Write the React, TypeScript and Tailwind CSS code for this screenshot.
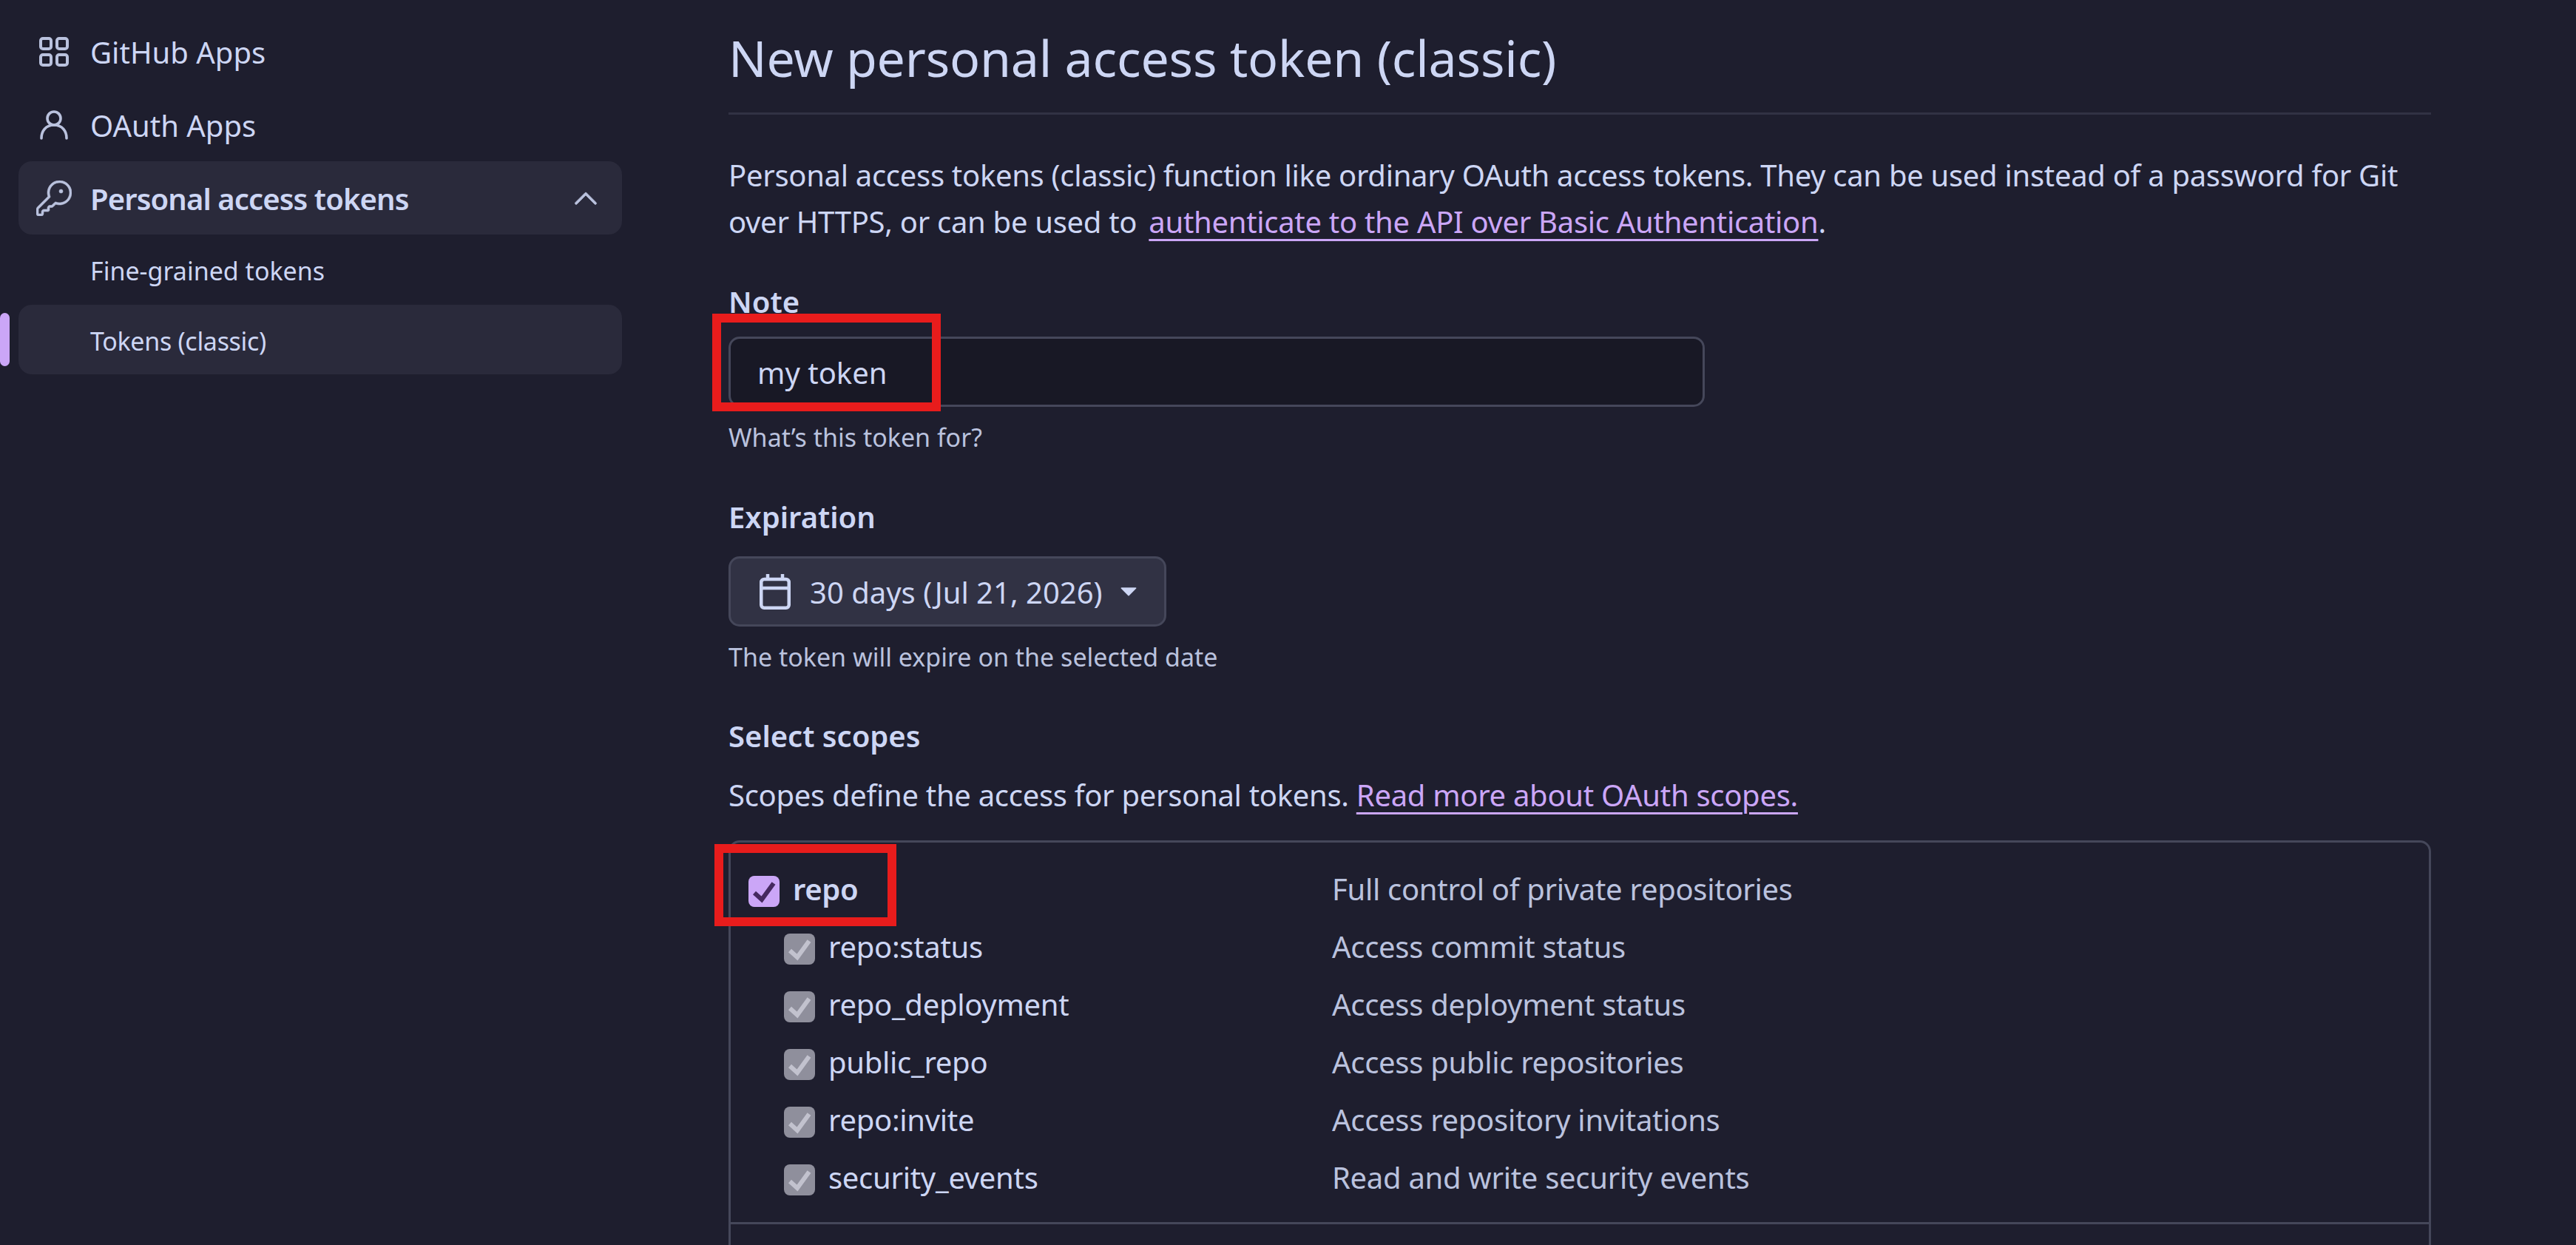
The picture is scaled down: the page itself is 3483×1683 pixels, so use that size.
import { GoKey, GoChevronUp, GoTriangleDown } from 'react-icons/go'

const scopes = [
  { name: 'repo:status', desc: 'Access commit status' },
  { name: 'repo_deployment', desc: 'Access deployment status' },
  { name: 'public_repo', desc: 'Access public repositories' },
  { name: 'repo:invite', desc: 'Access repository invitations' },
  { name: 'security_events', desc: 'Read and write security events' },
]

function Check({ color }: { color: string }) {
  return (
    <svg viewBox="0 0 42 42" className="w-[42px] h-[42px]" fill="none">
      <path d="M8 23l10 9L34 10" stroke={color} strokeWidth="6" />
    </svg>
  )
}

function AppsIcon() {
  return (
    <svg viewBox="0 0 16 16" className="w-[40px] h-[40px] text-[#bac2de] mr-[29px]" fill="none" stroke="currentColor" strokeWidth="1.6">
      <rect x="0.8" y="0.8" width="5.6" height="5.6" rx="1.2" />
      <rect x="9.6" y="0.8" width="5.6" height="5.6" rx="1.2" />
      <rect x="0.8" y="9.6" width="5.6" height="5.6" rx="1.2" />
      <rect x="9.6" y="9.6" width="5.6" height="5.6" rx="1.2" />
    </svg>
  )
}

function PersonIcon() {
  return (
    <svg viewBox="0 0 40 40" className="w-[40px] h-[40px] text-[#bac2de] mr-[29px]" fill="none" stroke="currentColor" strokeWidth="3.6" strokeLinecap="round">
      <circle cx="20" cy="11" r="9" />
      <path d="M3 38c0-10 6-18 17-18s17 8 17 18" />
    </svg>
  )
}

function CalendarIcon() {
  return (
    <svg viewBox="0 0 42 48" className="w-[42px] h-[48px] mr-[26px]" fill="none" stroke="currentColor" strokeWidth="4.5">
      <rect x="2.25" y="7" width="37.5" height="38.75" rx="4" />
      <path d="M2 19h38M11 0v8M31 0v8" />
    </svg>
  )
}

function Sidebar() {
  return (
    <nav className="w-[816px] shrink-0 ml-[25px] pt-[20px] flex flex-col text-[40px] text-[#cdd6f4]">
      <div className="h-[99px] flex items-center pl-[28px]">
        <AppsIcon />
        <span className="pt-[3px]">GitHub Apps</span>
      </div>
      <div className="h-[99px] flex items-center pl-[28px]">
        <PersonIcon />
        <span className="pt-[3px]">OAuth Apps</span>
      </div>
      <div className="h-[99px] flex items-center pl-[24px] pr-[24px] rounded-[18px] bg-[#2a2a3b]">
        <GoKey className="w-[48px] h-[48px] text-[#bac2de] mr-[25px]" stroke="currentColor" strokeWidth={0.3} />
        <span className="font-semibold flex-1 pt-[3px] tracking-[-0.9px]">Personal access tokens</span>
        <GoChevronUp className="w-[50px] h-[50px] text-[#bac2de]" stroke="currentColor" strokeWidth={0.3} />
      </div>
      <div className="h-[95px] flex items-center pl-[97px] pt-[3px] text-[34px]">Fine-grained tokens</div>
      <div className="relative h-[94px] flex items-center pl-[97px] pt-[5px] text-[34px] tracking-[-0.3px] rounded-[18px] bg-[#2a2a3b]">
        <span>Tokens (classic)</span>
        <div className="absolute left-[-25px] top-[11px] w-[13px] h-[72px] rounded-full bg-[#cba6f7]" />
      </div>
    </nav>
  )
}

function Main() {
  return (
    <main className="w-[2302px] ml-[144px] shrink-0 text-[40px] text-[#cdd6f4]">
      <div className="h-[155px] border-b-[3px] border-[#313244] pt-[30px]">
        <h1 className="text-[68px] leading-[96px] font-normal tracking-[-0.2px]">New personal access token (classic)</h1>
      </div>
      <p className="mt-[51px] leading-[62.5px] tracking-[-0.3px]">
        Personal access tokens (classic) function like ordinary OAuth access tokens. They can be used instead of a password for Git over HTTPS, or can be used to{' '}
        <a className="ml-[6px] text-[#cba6f7] underline underline-offset-[8px] decoration-[3px]">authenticate to the API over Basic Authentication</a>.
      </p>

      <label className="block mt-[49px] font-semibold leading-[56px]">Note</label>
      <div className="relative mt-[19px] w-[1320px] h-[95px] rounded-[15px] border-[3px] border-[#45475a] bg-[#181825] flex items-center pl-[36px] pt-[3px]">
        <span>my token</span>
        <div className="absolute left-[-25px] top-[-34px] w-[309px] h-[132px] border-[12px] border-[#e81c1c]" />
      </div>
      <p className="mt-[16px] text-[34px] leading-[50px] text-[#bac2de]">What’s this token for?</p>

      <label className="block mt-[55px] font-semibold leading-[56px]">Expiration</label>
      <button className="mt-[25px] w-[592px] h-[95px] rounded-[15px] border-[3px] border-[#45475a] bg-[#313244] flex items-center pl-[39px]">
        <CalendarIcon />
        <span className="pt-[3px]">30 days (Jul 21, 2026)</span>
        <GoTriangleDown className="w-[40px] h-[40px] ml-[15px]" />
      </button>
      <p className="mt-[16px] text-[34px] leading-[50px] text-[#bac2de]">The token will expire on the selected date</p>

      <label className="block mt-[54px] font-semibold leading-[56px]">Select scopes</label>
      <p className="mt-[21px] leading-[62px] tracking-[-0.3px]">
        Scopes define the access for personal tokens.{' '}
        <a className="text-[#cba6f7] underline underline-offset-[8px] decoration-[3px]">Read more about OAuth scopes.</a>
      </p>

      <div className="mt-[30px] h-[600px] rounded-t-[15px] border-[3px] border-[#45475a] pt-[24px] pl-[24px] tracking-[-0.3px]">
        <div className="relative h-[78px] flex items-center">
          <div className="w-[42px] h-[42px] mt-[5px] rounded-[8px] bg-[#cba6f7]">
            <Check color="#45295f" />
          </div>
          <span className="ml-[18px] w-[729px] font-semibold">repo</span>
          <span className="text-[#bac2de]">Full control of private repositories</span>
          <div className="absolute left-[-46px] top-[-22px] w-[246px] h-[111px] border-[12px] border-[#e81c1c]" />
        </div>
        {scopes.map((s) => (
          <div key={s.name} className="h-[78px] flex items-center pl-[48px]">
            <div className="w-[42px] h-[42px] mt-[5px] rounded-[8px] bg-[#8f8f9c]">
              <Check color="#c2c2ce" />
            </div>
            <span className="ml-[18px] w-[681px]">{s.name}</span>
            <span className="text-[#bac2de]">{s.desc}</span>
          </div>
        ))}
        <div className="mt-[21px] ml-[-24px] border-t-[3px] border-[#45475a]" />
      </div>
    </main>
  )
}

export default function App() {
  return (
    <div className="w-[3483px] h-[1683px] overflow-hidden bg-[#1e1e2e] flex font-['Noto_Sans',sans-serif]">
      <Sidebar />
      <Main />
    </div>
  )
}
